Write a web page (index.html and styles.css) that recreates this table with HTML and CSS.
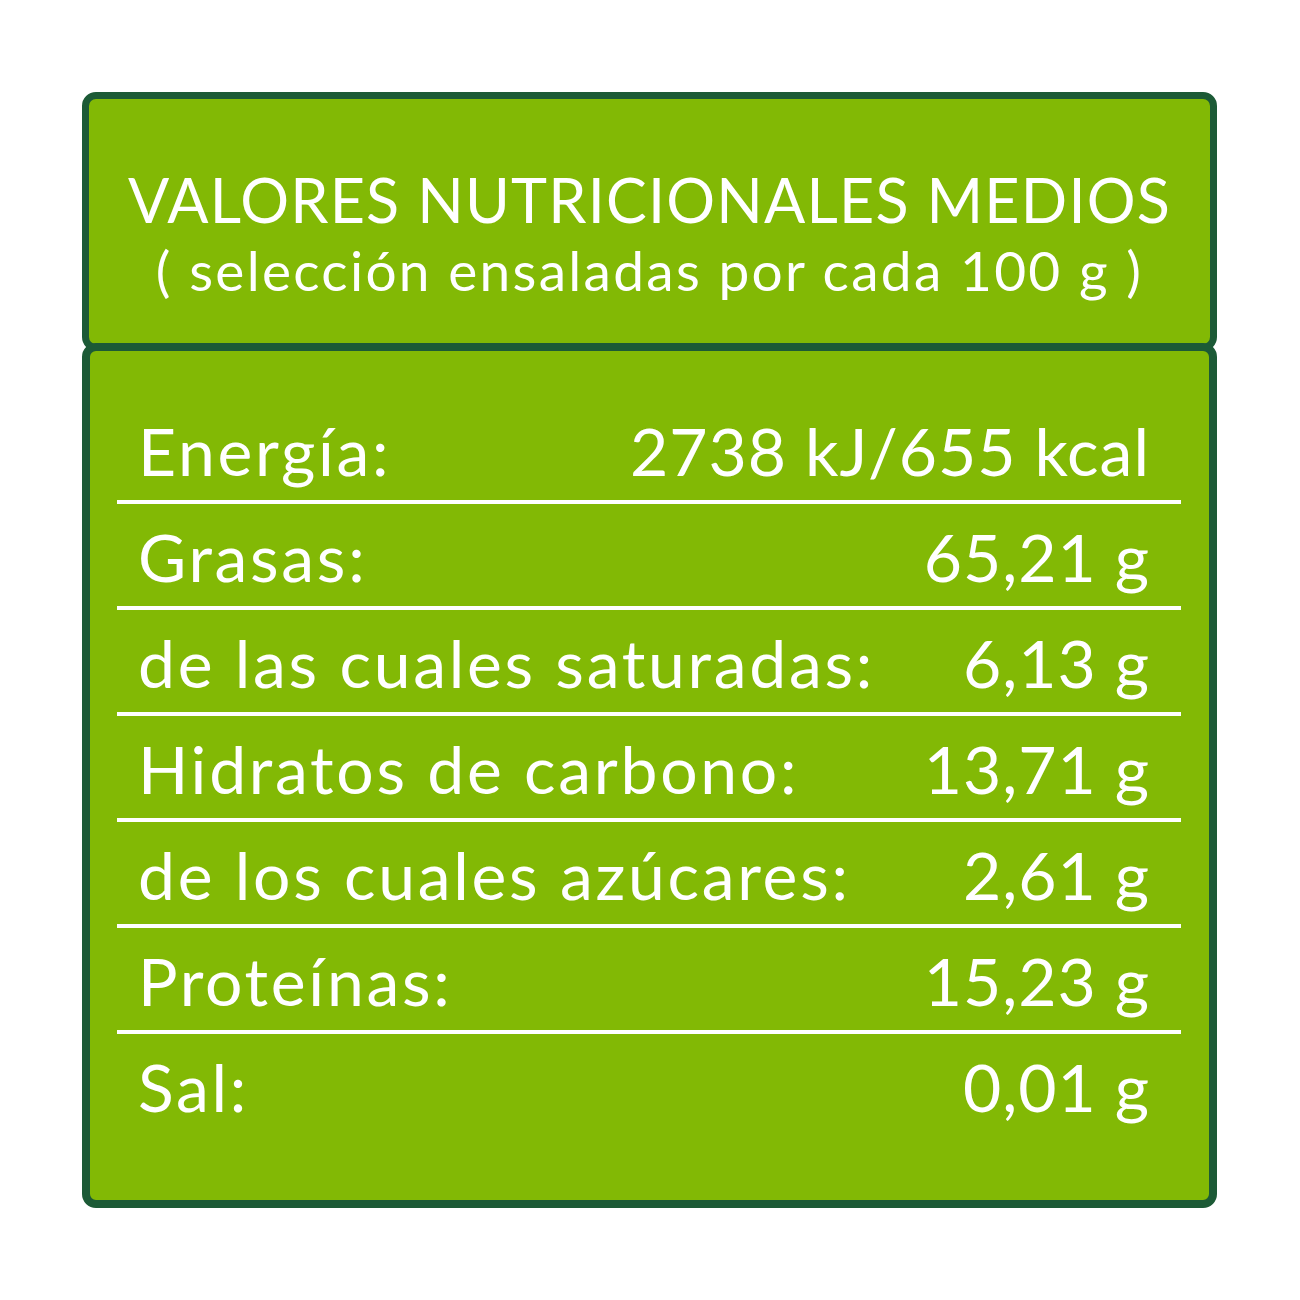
FILE: index.html
```html
<!DOCTYPE html>
<html lang="es">
<head>
<meta charset="utf-8">
<title>Valores nutricionales</title>
<link rel="stylesheet" href="styles.css">
</head>
<body>
<div class="label">
  <div class="head">
    <div class="title">VALORES NUTRICIONALES MEDIOS</div>
    <div class="subtitle">( selección ensaladas por cada 100 g )</div>
  </div>
  <div class="table">
    <div class="row"><span class="name">Energía:</span><span class="value">2738 kJ/655 kcal</span></div>
    <div class="row"><span class="name">Grasas:</span><span class="value">65,21 g</span></div>
    <div class="row"><span class="name">de las cuales saturadas:</span><span class="value">6,13 g</span></div>
    <div class="row"><span class="name">Hidratos de carbono:</span><span class="value">13,71 g</span></div>
    <div class="row"><span class="name">de los cuales azúcares:</span><span class="value">2,61 g</span></div>
    <div class="row"><span class="name">Proteínas:</span><span class="value">15,23 g</span></div>
    <div class="row last"><span class="name">Sal:</span><span class="value">0,01 g</span></div>
  </div>
</div>
</body>
</html>
```
FILE: styles.css
```css
html, body {
  margin: 0;
  padding: 0;
  background: #ffffff;
}
body {
  font-family: "Lato", "Open Sans", sans-serif;
  color: #ffffff;
}
.label {
  width: 1135px;
  margin: 92px 0 0 82px;
}
.head {
  box-sizing: border-box;
  height: 259px;
  background: #82b905;
  border: 7px solid #1c5a36;
  border-radius: 14px;
  text-align: center;
  padding-top: 70px;
}
.title {
  font-size: 61px;
  line-height: 1;
  letter-spacing: 1.2px;
}
.subtitle {
  font-size: 55px;
  line-height: 1;
  margin-top: 13px;
  letter-spacing: 2.3px;
}
.table {
  box-sizing: border-box;
  height: 865px;
  margin-top: -8px;
  background: #82b905;
  border: 8px solid #1c5a36;
  border-radius: 14px;
  padding: 47px 28px 0 27px;
}
.row {
  display: flex;
  justify-content: space-between;
  height: 102px;
  box-sizing: content-box;
  border-bottom: 4px solid #ffffff;
  padding: 0 31px 0 21px;
  font-size: 66px;
  line-height: 1;
}
.row span {
  display: block;
  padding-top: 20px;
  white-space: nowrap;
}
.name {
  letter-spacing: 2.7px;
}
.value {
  letter-spacing: 1px;
}
.row.last {
  border-bottom: none;
}
```
